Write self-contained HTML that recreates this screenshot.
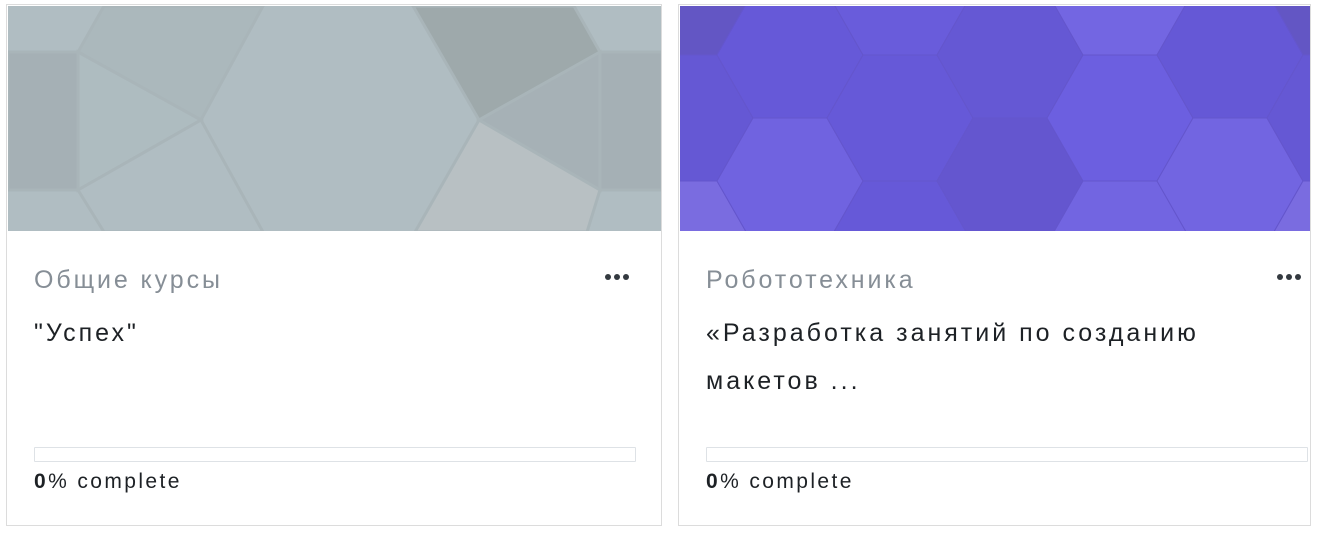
<!DOCTYPE html>
<html><head><meta charset="utf-8"><style>
*{margin:0;padding:0;box-sizing:border-box}
body{width:1344px;height:538px;background:#fff;position:relative;overflow:hidden;font-family:"Liberation Sans",sans-serif}
.card{position:absolute;top:4px;height:522px;border:1px solid #dcdcdc;background:#fff}
.img{position:absolute;left:1px;top:1px;height:225px;overflow:hidden}
.cat{position:absolute;left:27px;top:261px;font-size:25px;letter-spacing:2.9px;color:#868e96;white-space:nowrap}
.title{position:absolute;left:27px;top:304px;font-size:25px;letter-spacing:3px;line-height:48px;color:#1d2125;white-space:nowrap}
.dots{position:absolute;top:269px;display:flex;gap:3px}
.dots i{width:6px;height:6px;border-radius:50%;background:#343a40;display:block}
.bar{position:absolute;left:27px;top:442px;height:15px;border:1px solid #dee2e6;border-radius:1px}
.pc{position:absolute;left:27px;top:465px;font-size:21px;letter-spacing:2.4px;color:#1d2125;white-space:nowrap}
</style></head><body>
<div class="card" style="left:6px;width:656px">
 <div class="img" style="width:653px">
  <svg width="653" height="225" viewBox="7 6 653 225">
   <rect x="0" y="0" width="670" height="240" fill="#b0bdc2"/>
   <g stroke="#a9b5b9" stroke-width="3">
   <rect x="7" y="52" width="70" height="138" fill="#a5b0b5"/>
   <polygon points="103,6 262,6 200,120 77,52" fill="#abb8bc"/>
   <polygon points="77,52 200,120 77,190" fill="#aebcc0"/>
   <polygon points="77,190 200,120 262,232 103,232" fill="#b0bdc2"/>
   <polygon points="412,6 573,6 599,52 478,120" fill="#9ea9ab"/>
   <polygon points="599,52 478,120 599,190" fill="#a6b1b6"/>
   <rect x="599" y="52" width="62" height="138" fill="#a5b0b5"/>
   <polygon points="478,120 599,190 586,232 414,232" fill="#b8c0c3"/>
   </g>
  </svg>
 </div>
 <div class="cat">Общие курсы</div>
 <div class="title">"Успех"</div>
 <div class="dots" style="left:598px"><i></i><i></i><i></i></div>
 <div class="bar" style="width:602px"></div>
 <div class="pc"><b>0</b>% complete</div>
</div>
<div class="card" style="left:678px;width:633px">
 <div class="img" style="width:630px">
  <svg width="630" height="225" viewBox="679 6 630 225">
   <g stroke="#6456cc" stroke-width="1">
   <polygon transform="translate(679,-8)" points="-73,0 -37,-63 37,-63 73,0 37,63 -37,63" fill="#6356c4"/>
   <polygon transform="translate(679,118)" points="-73,0 -37,-63 37,-63 73,0 37,63 -37,63" fill="#6558d4"/>
   <polygon transform="translate(679,244)" points="-73,0 -37,-63 37,-63 73,0 37,63 -37,63" fill="#7a6ce0"/>
   <polygon transform="translate(789,55)" points="-73,0 -37,-63 37,-63 73,0 37,63 -37,63" fill="#6659d8"/>
   <polygon transform="translate(789,181)" points="-73,0 -37,-63 37,-63 73,0 37,63 -37,63" fill="#7063e0"/>
   <polygon transform="translate(899,-8)" points="-73,0 -37,-63 37,-63 73,0 37,63 -37,63" fill="#695cdb"/>
   <polygon transform="translate(899,118)" points="-73,0 -37,-63 37,-63 73,0 37,63 -37,63" fill="#6659d8"/>
   <polygon transform="translate(899,244)" points="-73,0 -37,-63 37,-63 73,0 37,63 -37,63" fill="#6659d8"/>
   <polygon transform="translate(1009,55)" points="-73,0 -37,-63 37,-63 73,0 37,63 -37,63" fill="#6558d4"/>
   <polygon transform="translate(1009,181)" points="-73,0 -37,-63 37,-63 73,0 37,63 -37,63" fill="#6456cf"/>
   <polygon transform="translate(1119,-8)" points="-73,0 -37,-63 37,-63 73,0 37,63 -37,63" fill="#7366e2"/>
   <polygon transform="translate(1119,118)" points="-73,0 -37,-63 37,-63 73,0 37,63 -37,63" fill="#6c5fe0"/>
   <polygon transform="translate(1119,244)" points="-73,0 -37,-63 37,-63 73,0 37,63 -37,63" fill="#7265e1"/>
   <polygon transform="translate(1229,55)" points="-73,0 -37,-63 37,-63 73,0 37,63 -37,63" fill="#6558d6"/>
   <polygon transform="translate(1229,181)" points="-73,0 -37,-63 37,-63 73,0 37,63 -37,63" fill="#7265e1"/>
   <polygon transform="translate(1339,-8)" points="-73,0 -37,-63 37,-63 73,0 37,63 -37,63" fill="#6356c4"/>
   <polygon transform="translate(1339,118)" points="-73,0 -37,-63 37,-63 73,0 37,63 -37,63" fill="#6558d4"/>
   <polygon transform="translate(1339,244)" points="-73,0 -37,-63 37,-63 73,0 37,63 -37,63" fill="#7a6ce0"/>
   </g>
  </svg>
 </div>
 <div class="cat">Робототехника</div>
 <div class="title">«Разработка занятий по созданию<br>макетов ...</div>
 <div class="dots" style="left:598px"><i></i><i></i><i></i></div>
 <div class="bar" style="width:602px"></div>
 <div class="pc"><b>0</b>% complete</div>
</div>
</body></html>
